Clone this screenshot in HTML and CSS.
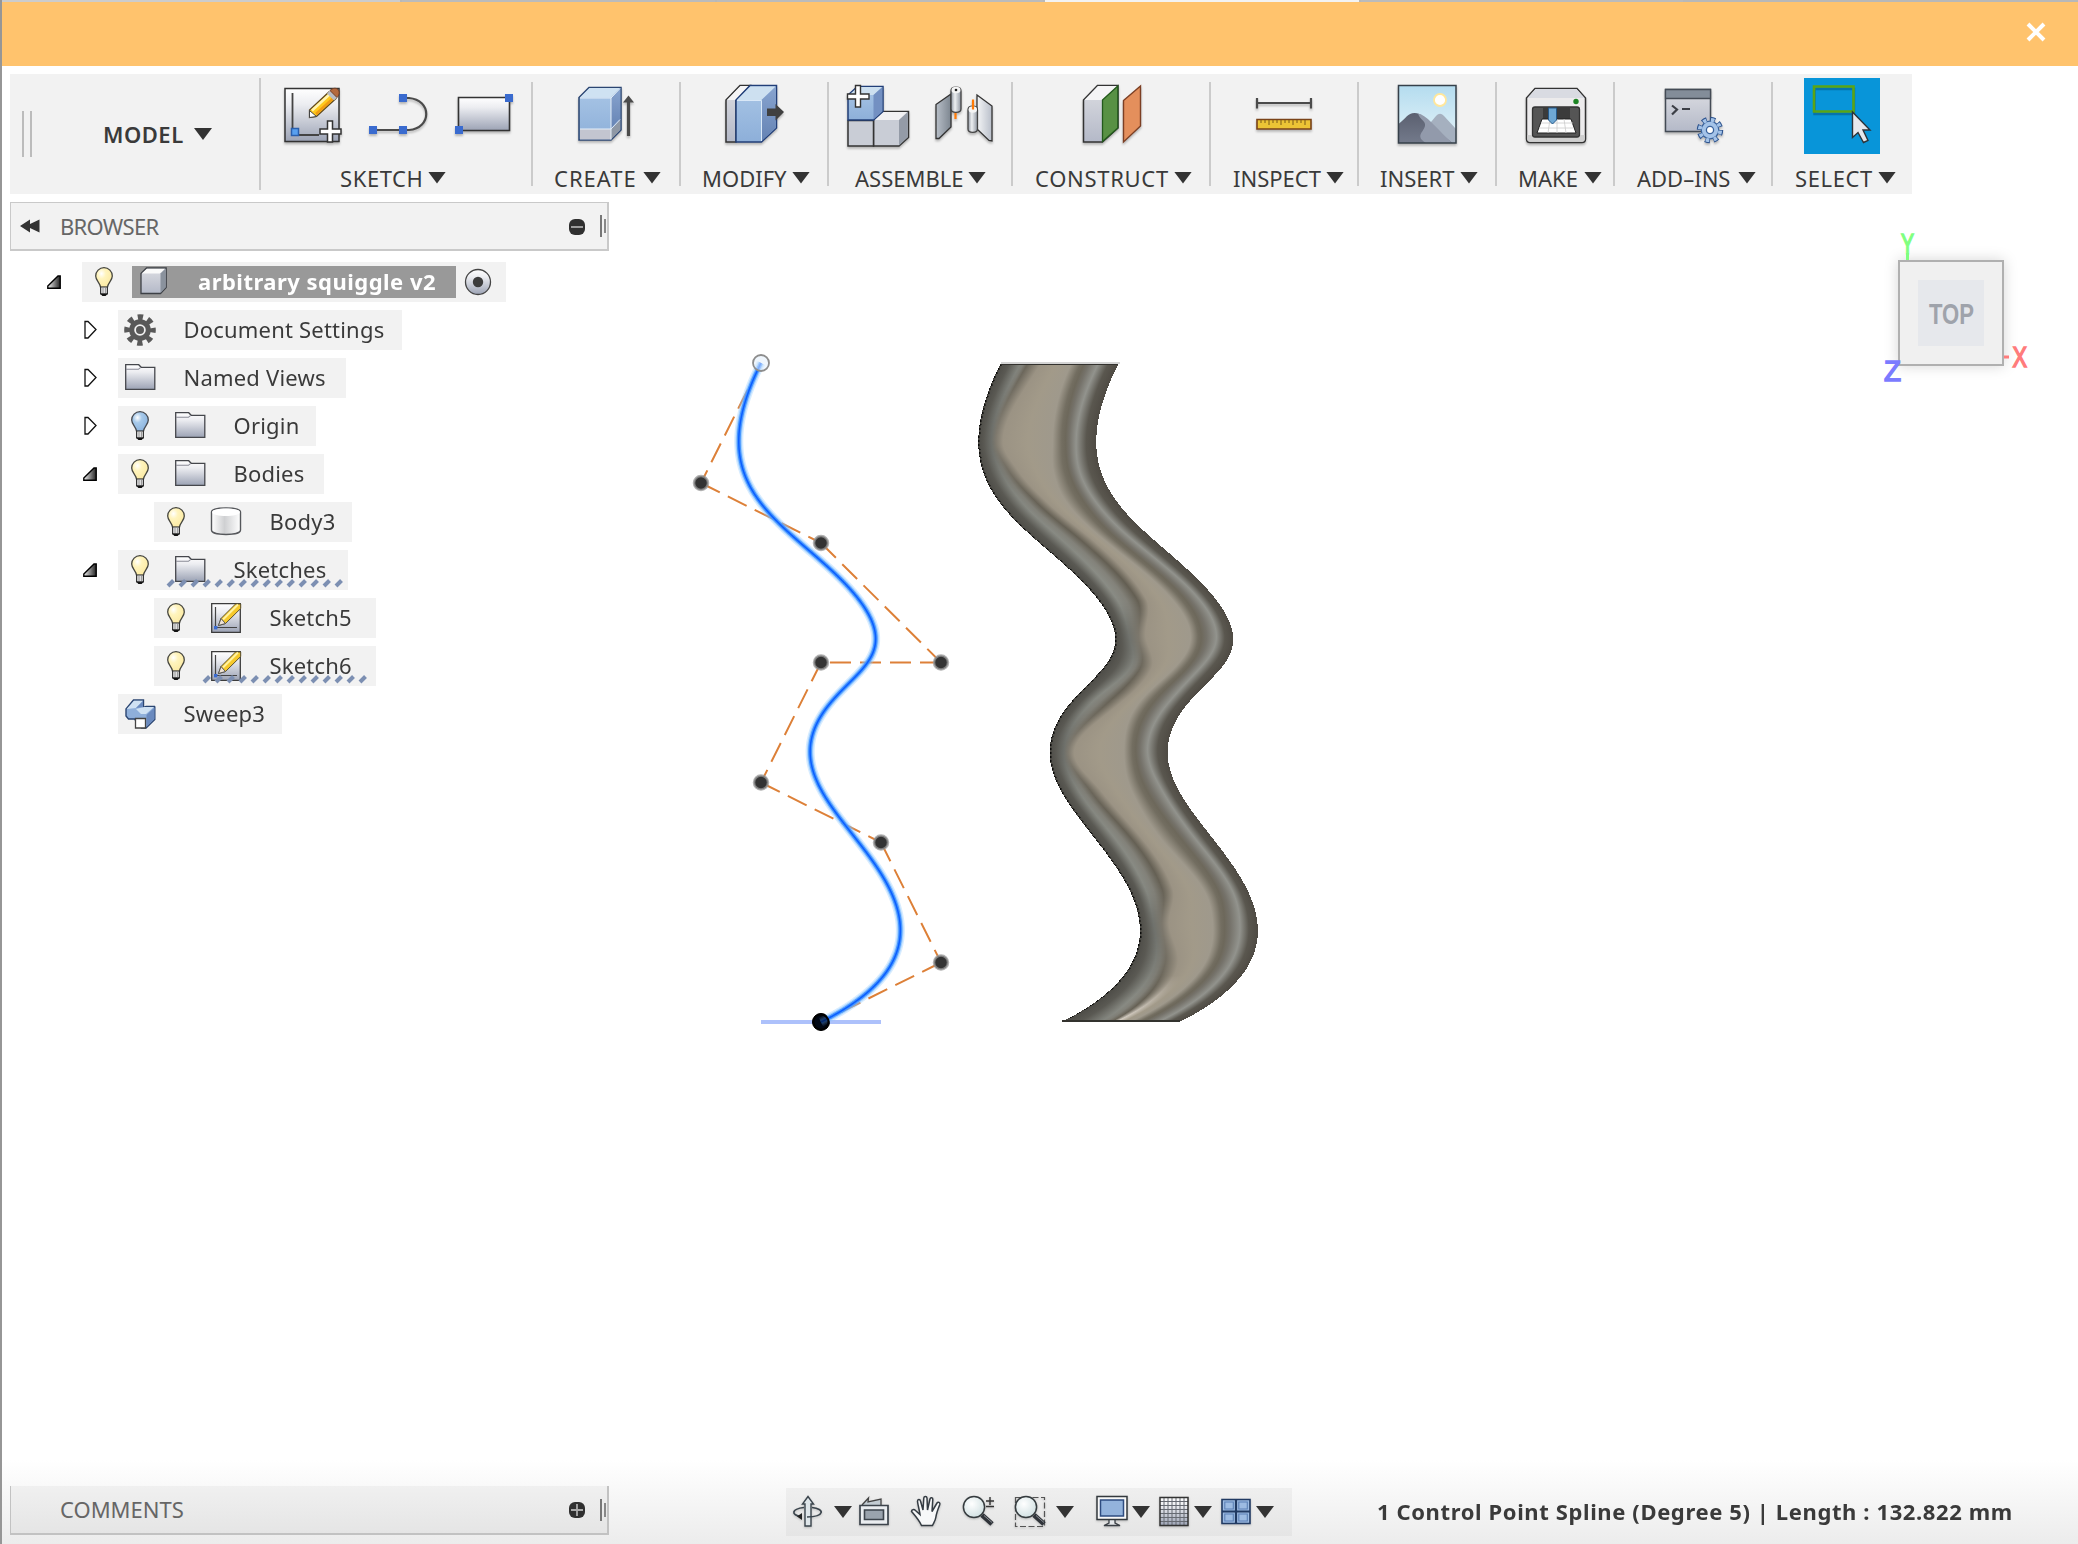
FILE: index.html
```html
<!DOCTYPE html>
<html lang="en">
<head>
<meta charset="utf-8">
<title>arbitrary squiggle v2</title>
<link rel="stylesheet" href="styles.css">
</head>
<body>
<svg class="defs" width="0" height="0">
  <defs>
    <linearGradient id="steel" x1="0" y1="0" x2="0" y2="1"><stop offset="0" stop-color="#fff"/><stop offset=".3" stop-color="#ecedf1"/><stop offset="1" stop-color="#9ca3b5"/></linearGradient>
    <linearGradient id="blue" x1="0" y1="0" x2="0" y2="1"><stop offset="0" stop-color="#a9c6e6"/><stop offset="1" stop-color="#8dafd9"/></linearGradient>
    <linearGradient id="blueside" x1="0" y1="0" x2="0" y2="1"><stop offset="0" stop-color="#88a4cf"/><stop offset="1" stop-color="#6583b4"/></linearGradient>
    <linearGradient id="grey" x1="0" y1="0" x2="0" y2="1"><stop offset="0" stop-color="#dcdde2"/><stop offset="1" stop-color="#b4b9c8"/></linearGradient>
    <linearGradient id="cyl" x1="0" y1="0" x2="1" y2="0"><stop offset="0" stop-color="#fff"/><stop offset=".45" stop-color="#cfd0d2"/><stop offset="1" stop-color="#fff"/></linearGradient>
    <linearGradient id="pin" x1="0" y1="0" x2="1" y2="0"><stop offset="0" stop-color="#8f96a1"/><stop offset=".4" stop-color="#eef0f2"/><stop offset="1" stop-color="#8f96a1"/></linearGradient>
    <linearGradient id="leaf" x1="0" y1="0" x2="1" y2="0"><stop offset="0" stop-color="#b8bfc8"/><stop offset="1" stop-color="#7d8690"/></linearGradient>
    <linearGradient id="leaf2" x1="0" y1="0" x2="1" y2="0"><stop offset="0" stop-color="#f4f5f6"/><stop offset="1" stop-color="#b9bfca"/></linearGradient>
    <linearGradient id="sky" x1="0" y1="0" x2="0" y2="1"><stop offset="0" stop-color="#b4dcef"/><stop offset="1" stop-color="#e6f4f9"/></linearGradient>
    <linearGradient id="hill" x1="0" y1="0" x2="0" y2="1"><stop offset="0" stop-color="#5b6070"/><stop offset="1" stop-color="#737a8b"/></linearGradient>
    <linearGradient id="fold" x1="0" y1="0" x2="1" y2="0"><stop offset="0" stop-color="#f2f2f2"/><stop offset="1" stop-color="#222"/></linearGradient>
    <radialGradient id="yglow" cx=".35" cy=".3" r=".75"><stop offset="0" stop-color="#fff"/><stop offset=".35" stop-color="#fff4bd"/><stop offset="1" stop-color="#fbe9a0"/></radialGradient>
    <radialGradient id="bglow" cx=".35" cy=".3" r=".75"><stop offset="0" stop-color="#fff"/><stop offset=".35" stop-color="#a6c9ea"/><stop offset="1" stop-color="#8ab2dd"/></radialGradient>
    <radialGradient id="lens" cx=".4" cy=".35" r=".7"><stop offset="0" stop-color="#fff"/><stop offset="1" stop-color="#cfdfe1"/></radialGradient>
    <pattern id="hatch" width="12" height="12" patternUnits="userSpaceOnUse"><path d="M2 9 7.500 3.500" stroke="#7c8fb2" stroke-width="4"/></pattern>
  </defs>
  <symbol id="bulb-base" viewBox="0 0 20 32"><path d="M6.6 21h6.8v7H6.6z" fill="#e9e9ea" stroke="#333" stroke-width="1.2"/><path d="M9 21v6M11.4 21v6" stroke="#888" stroke-width=".9"/><path d="M6.2 27.4h7.6L11.6 30H8.4z" fill="#111"/></symbol>
  <symbol id="bulb" viewBox="0 0 20 32"><path d="M10 1.7a8.3 8.3 0 0 0-8.3 8.4c0 4.4 4.2 6.4 4.9 11.4h6.8c.7-5 4.9-7 4.9-11.4A8.3 8.3 0 0 0 10 1.700z" fill="url(#yglow)" stroke="#46463f" stroke-width="1.3"/><use href="#bulb-base" width="20" height="32"/></symbol>
  <symbol id="bulb-off" viewBox="0 0 20 32"><path d="M10 1.700a8.300 8.300 0 0 0-8.300 8.400c0 4.400 4.200 6.400 4.900 11.400h6.800c.7-5 4.900-7 4.900-11.400A8.300 8.300 0 0 0 10 1.700z" fill="url(#bglow)" stroke="#46494f" stroke-width="1.300"/><use href="#bulb-base" width="20" height="32"/></symbol>
  <symbol id="folder" viewBox="0 0 32 32"><path d="M1.700 2.700h13l2.500 2.600h13.600v22H1.700z" fill="url(#steel)" stroke="#45474c" stroke-width="1.300"/><path d="M2 7.300h12.400l2.400-2" fill="none" stroke="#8a8c96" stroke-width="1.100"/></symbol>
  <symbol id="sketch" viewBox="0 0 32 32"><path d="M1.700 1.700h28.600v28.600H1.700z" fill="url(#steel)" stroke="#3c3c3c" stroke-width="1.300"/><path d="M5.500 5v20.500H27" fill="none" stroke="#444" stroke-width="1.200"/><path d="M4 24h3.400v3.400H4z" fill="#3a6bd0"/><path d="M8.500 23.500 11 16.500 25.500 2h5.200v4.500L15.500 21.500z" fill="#f6c92c" stroke="#5d5230" stroke-width="1"/><path d="M13 17.500 28 2.500" stroke="#fff2a0" stroke-width="2"/><path d="M8.500 23.500 11 16.500l4.500 5z" fill="#efe3d6" stroke="#555" stroke-width="1"/></symbol>
  <symbol id="closed" viewBox="0 0 14 20"><path d="M1 1.500h3l8 8-8 8.500H1z" fill="#fff" stroke="#111" stroke-width="1.300"/></symbol>
  <symbol id="open" viewBox="0 0 14 14"><path d="M.8 13.200V11L11 1h2.200v12.200z" fill="url(#fold)" stroke="#000" stroke-width="1.400"/></symbol>
  <symbol id="lensicon" viewBox="0 0 32 32"><path d="m20 20 10 9" stroke="#30343a" stroke-width="5"/><path d="m22 20.500 8 7" stroke="#8b9096" stroke-width="1"/><circle cx="12" cy="12" r="10.600" fill="url(#lens)" stroke="#353b3e" stroke-width="1.500"/></symbol>
</svg>

<div class="tabstrip"><i class="tab t1"></i><i class="tab t2"></i><i class="tab t3"></i><i class="tab t4"></i><i class="tab t5"></i></div>
<header class="banner">
  <svg class="close" viewBox="0 0 20 20"><path d="m2 2 16 16M18 2 2 18" stroke="#fff" stroke-width="4"/></svg>
</header>

<nav class="toolbar">
  <div class="workspace"><i class="grip"></i><span class="model">MODEL</span><i class="caret"></i></div>

  <section class="group g-sketch">
    <div class="tools">
      <svg class="tool" viewBox="0 0 76 76"><path d="M11 10.500h54v53H11z" fill="url(#steel)" stroke="#333" stroke-width="1.500"/><path d="M18.500 15v42H45" fill="none" stroke="#444" stroke-width="1.800"/><path d="M17.500 50.500h7v7h-7z" fill="#58a0f0" stroke="#2a5fae" stroke-width="1.500"/><path d="M35.500 39.500v-7.500L55 14l7 6.500-19.500 18z" fill="#ffc91c" stroke="#5e4820" stroke-width="1.300"/><path d="M38 32.500 56 16" stroke="#fff4b0" stroke-width="2.500"/><path d="m42 36 18-16.500" stroke="#f09b13" stroke-width="2.500"/><path d="m53 15.500 7 7 3-3-7-7z" fill="#b9bcc4"/><path d="m56 12.500 7 7c3-3 2.500-6.500 1-8s-5-2-8 1z" fill="#b4693e" stroke="#6b3a22"/><path d="M35.500 39.500v-7l7 6z" fill="#fff" stroke="#444"/><path d="M53.500 43h5v8h8.500v5h-8.500v8h-5v-8H46v-5h7.500z" fill="#fff" stroke="#333" stroke-width="1.500"/></svg>
      <svg class="tool" viewBox="0 0 76 76"><path d="M13 52h30h6C72 50 72 22 49 20h-6" fill="none" stroke="#4b4b4b" stroke-width="2.200"/><path d="M9 48h8v8H9zM39 48h8v8h-8zM39 16h8v8h-8z" fill="#3a6bcf"/></svg>
      <svg class="tool" viewBox="0 0 76 76"><path d="M12.500 19.500h51v33h-51z" fill="url(#steel)" stroke="#333" stroke-width="1.600"/><path d="M59 16h8v8h-8zM9 48h8v8H9z" fill="#3a6bcf"/></svg>
    </div>
    <div class="label"><span>SKETCH</span><i class="caret"></i></div>
  </section>
  <section class="group g-create">
    <div class="tools">
      <svg class="tool" viewBox="0 0 76 76"><path d="M11 19.500 21 9.500h32v42.500L43 62H11z" fill="url(#blue)" stroke="#2b4571" stroke-width="1.500"/><path d="M12 19.500 21.500 10H52l-9 9.500z" fill="#cfe2f2"/><path d="M43 19.500 52.300 10v32L43 51.500z" fill="url(#blueside)"/><path d="M12 51h31v10.500H12z" fill="#c3c5d0"/><path d="m43 51.500 9.300-9.500v10L43 61.500z" fill="#8f98a5"/><path d="M12 20h31v41.500M12 51h31l9-9.500M43 20l9-9.500" fill="none" stroke="#e4eef8" stroke-width="1"/><path d="M60.500 58V24" stroke="#4b4b4b" stroke-width="3.200"/><path d="m55 24.500 5.500-7 5.500 7z" fill="#4b4b4b"/></svg>
    </div>
    <div class="label"><span>CREATE</span><i class="caret"></i></div>
  </section>
  <section class="group g-modify">
    <div class="tools">
      <svg class="tool" viewBox="0 0 76 76"><path d="m10 22 14-14.500h10L20 22v42H10z" fill="url(#grey)" stroke="#333" stroke-width="1.500"/><path d="m11 22 13.500-14H33L20 22z" fill="#f5f5f6"/><path d="M20 22 34 7.500h26.500V50L45.500 64H20z" fill="url(#blue)" stroke="#223f78" stroke-width="1.500"/><path d="M21 22 34.500 8.500H59.500L45.500 22z" fill="#cde0f0"/><path d="m45.500 22 14.300-13.500V50L45.500 63z" fill="url(#blueside)"/><path d="M21 22.500h24.500V63" fill="none" stroke="#d9e8f7" stroke-width="1"/><path d="M51 30.500h8.500V26l8.500 8-8.500 8.500V38H51z" fill="#404040"/></svg>
    </div>
    <div class="label"><span>MODIFY</span><i class="caret"></i></div>
  </section>
  <section class="group g-assemble">
    <div class="tools">
      <svg class="tool" viewBox="0 0 76 76"><path d="M34.500 42 43 33.500h26.500v26L60 68H34.500z" fill="#c9cdd6" stroke="#333" stroke-width="1.500"/><path d="m35.500 42 8.500-8h24.500l-8.500 8z" fill="#f1f1f3"/><path d="m60 42 8.700-8v25L60 67.500z" fill="#949ba7"/><path d="M9 42.500h25.500V68H9z" fill="#c9cdd6" stroke="#333" stroke-width="1.500"/><path d="m9 17 9.500-8.500H44v25L34.500 42H9z" fill="url(#blue)" stroke="#223f78" stroke-width="1.500"/><path d="m10 17 9-8h24.500l-9 8z" fill="#cde0f0"/><path d="m34.500 17 8.800-8v24.500l-8.800 8z" fill="#7390c2"/><path d="M16.500 7.500h5V16H30v5h-8.500v8h-5v-8H8.500v-5h8z" fill="#fff" stroke="#333" stroke-width="1.400"/></svg>
      <svg class="tool" viewBox="0 0 76 76"><path d="M11 26.500 26 16v33L14 60.500h-3z" fill="url(#leaf)" stroke="#333" stroke-width="1.300"/><path d="M30.500 34v7" stroke="#ff7a05" stroke-width="2.200"/><path d="M26 13c0-5 10-5 10 0v18c0 4.500-10 4.500-10 0z" fill="url(#pin)" stroke="#444" stroke-width="1.300"/><ellipse cx="31" cy="12" rx="4.500" ry="3.300" fill="#f5f5f5"/><circle cx="31" cy="12" r="1.300" fill="#222"/><path d="M52 17 67 28v35l-3-.5L52 51z" fill="url(#leaf2)" stroke="#333" stroke-width="1.300"/><path d="M43 32c0-5 9.500-5 9.500 0v19c0 4.500-9.500 4.500-9.500 0z" fill="url(#pin)" stroke="#444" stroke-width="1.300"/><ellipse cx="47.800" cy="31.500" rx="4.200" ry="3.300" fill="#f5f5f5"/><path d="M48 21.500v10" stroke="#ff7a05" stroke-width="2.200"/></svg>
    </div>
    <div class="label"><span>ASSEMBLE</span><i class="caret"></i></div>
  </section>
  <section class="group g-construct">
    <div class="tools">
      <svg class="tool" viewBox="0 0 76 76"><path d="m10.500 22 14-14.500H45V50L29.500 64h-19z" fill="url(#grey)" stroke="#333" stroke-width="1.500"/><path d="m11.500 22 13.500-14h19L29.500 22z" fill="#f5f5f6"/><path d="M29.500 22 44.800 8v42L29.500 63.500z" fill="#589144" stroke="#235a1c" stroke-width="1.300"/><path d="M50.500 22.500 67.500 8v40L50.500 64z" fill="#e48f5c" stroke="#7c3f24" stroke-width="1.400"/></svg>
    </div>
    <div class="label"><span>CONSTRUCT</span><i class="caret"></i></div>
  </section>
  <section class="group g-inspect">
    <div class="tools">
      <svg class="tool" viewBox="0 0 76 76"><path d="M11 25h54M11 20v10.500M65 20v10.500" stroke="#4b4b4b" stroke-width="2.200"/><path d="M11 41.500h54v9.500H11z" fill="#ecc435" stroke="#7a4318" stroke-width="1.600"/><path d="M15 42v3m4-3v3m4-3v5m4-5v3m4-3v3m4-3v5m4-5v3m4-3v3m4-3v5m4-5v3m4-3v3m4-3v5" stroke="#7a5a18" stroke-width="1"/></svg>
    </div>
    <div class="label"><span>INSPECT</span><i class="caret"></i></div>
  </section>
  <section class="group g-insert">
    <div class="tools">
      <svg class="tool" viewBox="0 0 76 76"><path d="M9.500 7.500h57.500v57.500H9.500z" fill="url(#sky)"/><circle cx="51" cy="22" r="6" fill="#fff" stroke="#ffe79b" stroke-width="1.800"/><path d="m37 50 10-12c3-3 5-3 8 0l12 13v14H37z" fill="#a5b0bf"/><path d="M9.500 46c8-6 9-11 16-11s11 6 17 13l21 17h-54z" fill="url(#hill)"/><path d="M29 35.500c9 2 16 12 34 29.500H37c-11-7-3-10-1-17 1-5-5-6-7-12.500z" fill="#929aab"/><path d="M9.500 7.500h57.500v57.500H9.500z" fill="none" stroke="#36404a" stroke-width="1.500"/></svg>
    </div>
    <div class="label"><span>INSERT</span><i class="caret"></i></div>
  </section>
  <section class="group g-make">
    <div class="tools">
      <svg class="tool" viewBox="0 0 76 76"><path d="M9.500 20 18 10.500h42l8.500 9.500v41c0 2-1.500 3.500-3.500 3.500H13c-2 0-3.500-1.500-3.500-3.500z" fill="#ecebec" stroke="#333" stroke-width="1.500"/><path d="m10.500 20 8-9h41l8 9z" fill="#d9dbe2"/><path d="M10.300 57h57.400v4c0 1.500-1.200 2.700-2.700 2.700H13c-1.500 0-2.700-1.200-2.700-2.700z" fill="#cfcfcf"/><rect x="15.500" y="29" width="47" height="30" rx="2.500" fill="#555" stroke="#333" stroke-width="1.300"/><path d="M26 30h27v12H26z" fill="#3b3b3b"/><path d="M25 41h29l5 14H20z" fill="#fff" stroke="#222"/><path d="M22 50h34M24 45h32M33 41l-2 14M40 41v14M47 41l2 14" stroke="#ccc" stroke-width=".8"/><path d="M31.500 30h8v12l-4 4-4-4z" fill="#6fa8d4" stroke="#25598a"/><circle cx="59" cy="23.500" r="2.700" fill="#1c8423"/></svg>
    </div>
    <div class="label"><span>MAKE</span><i class="caret"></i></div>
  </section>
  <section class="group g-addins">
    <div class="tools">
      <svg class="tool" viewBox="0 0 76 76"><path d="M10.500 11.500h45v42h-45z" fill="url(#grey)" stroke="#444b55" stroke-width="1.500"/><path d="M10.500 11.500h45v9h-45z" fill="#838d99" stroke="#444b55" stroke-width="1.300"/><path d="m17 27.500 5 4-5 5M27 31h8" fill="none" stroke="#3c3f46" stroke-width="2.200"/><circle cx="55" cy="52" r="10.500" fill="none" stroke="#2f5590" stroke-width="5.500" stroke-dasharray="4.700 3.550"/><circle cx="55" cy="52" r="8.800" fill="#a4c3e8" stroke="#3a639c" stroke-width="1.300"/><circle cx="55" cy="52" r="10.200" fill="none" stroke="#a4c3e8" stroke-width="3.800" stroke-dasharray="3.300 4.710" stroke-dashoffset="-.7"/><circle cx="55" cy="52" r="3.600" fill="#fff" stroke="#3a639c" stroke-width="1.300"/></svg>
    </div>
    <div class="label"><span>ADD–INS</span><i class="caret"></i></div>
  </section>
  <section class="group g-select">
    <div class="tools">
      <svg class="tool active" viewBox="0 0 76 76"><path d="M10 9h39.500v25H10z" fill="none" stroke="#0673ac" stroke-width="2.500" transform="translate(.5 2)"/><path d="M10 8.500h39.500v25H10z" fill="none" stroke="#5ba414" stroke-width="2.600"/><path d="M48.500 34v25.500l5.500-5 5.500 10 4.500-2-5-10.500h7z" fill="#e6e8ed" stroke="#2c3238" stroke-width="1.400"/></svg>
    </div>
    <div class="label"><span>SELECT</span><i class="caret"></i></div>
  </section>
</nav>

<main class="workarea">
  <canvas class="scene" id="scene" width="700" height="720"></canvas>
  <svg class="viewcube" viewBox="0 0 160 180">
    <rect class="cube" x="25" y="35" width="104" height="104"/>
    <rect x="44" y="54" width="66" height="66" fill="#e6e8ec"/>
    <text class="face" x="55" y="97.500" textLength="45" lengthAdjust="spacingAndGlyphs">TOP</text>
    <text class="axis y" x="27" y="28" textLength="13" lengthAdjust="spacingAndGlyphs">Y</text>
    <path d="M33.500 27v7" stroke="#80ff80" stroke-width="3"/>
    <text class="axis x" x="138.500" y="141" textLength="14.500" lengthAdjust="spacingAndGlyphs">X</text>
    <path d="M130 131h5" stroke="#ff7b7b" stroke-width="3"/>
    <text class="axis z" x="10" y="155" textLength="17" lengthAdjust="spacingAndGlyphs">Z</text>
  </svg>

  <aside class="sidebar">
    <div class="panel browser">
      <svg class="rewind" viewBox="0 0 20 14"><path d="M0 7 10 .5V5l9.500-4.500v13L10 9v4.500z" fill="#333"/></svg>
      <span class="ptitle tight">BROWSER</span>
      <svg class="dot" viewBox="0 0 16 16"><rect width="16" height="16" rx="6" fill="#303030"/><path d="M2 8h12" stroke="#aaa" stroke-width="1.800"/></svg>
      <i class="pgrip"></i>
    </div>

    <ul class="tree">
      <li class="row l0"><svg class="twist open"><use href="#open"/></svg>
        <div class="node root"><svg class="bulb"><use href="#bulb"/></svg>
          <div class="selected"><svg class="ico" viewBox="0 0 32 32"><path d="M3 7.500 8.500 2h19.700v19.500L22.500 27.500H3z" fill="url(#grey)" stroke="#3d4046" stroke-width="1.300"/><path d="M3.700 7.500 9 2.700h18l-5 4.800z" fill="#fafafa"/><path d="m22.500 7.500 5-5v19l-5 5.500z" fill="#8a929d"/></svg><span>arbitrary squiggle v2</span></div>
          <svg class="radio" viewBox="0 0 28 28"><circle cx="14" cy="14" r="12.500" fill="url(#steel)" stroke="#444" stroke-width="1.300"/><circle cx="14" cy="14" r="5.200" fill="#3d3d3d"/></svg></div></li>
      <li class="row l1"><svg class="twist closed"><use href="#closed"/></svg><div class="node w284"><svg class="ico" viewBox="0 0 32 32"><circle cx="16" cy="16" r="12.800" fill="none" stroke="#595959" stroke-width="6" stroke-dasharray="5.200 4.850" stroke-dashoffset="2.600"/><circle cx="16" cy="16" r="8.300" fill="none" stroke="#595959" stroke-width="5"/><circle cx="16" cy="16" r="4" fill="#595959"/></svg><span>Document Settings</span></div></li>
      <li class="row l1"><svg class="twist closed"><use href="#closed"/></svg><div class="node w228"><svg class="ico"><use href="#folder"/></svg><span>Named Views</span></div></li>
      <li class="row l1"><svg class="twist closed"><use href="#closed"/></svg><div class="node w198"><svg class="bulb"><use href="#bulb-off"/></svg><svg class="ico"><use href="#folder"/></svg><span>Origin</span></div></li>
      <li class="row l1"><svg class="twist open"><use href="#open"/></svg><div class="node w206"><svg class="bulb"><use href="#bulb"/></svg><svg class="ico"><use href="#folder"/></svg><span>Bodies</span></div></li>
      <li class="row l2"><div class="node w198"><svg class="bulb"><use href="#bulb"/></svg><svg class="ico" viewBox="0 0 32 32"><path d="M1.500 6v18c0 6 29 6 29 0V6c0-5.500-29-5.500-29 0z" fill="url(#cyl)" stroke="#55575b" stroke-width="1.400"/><path d="M2.200 6.200c0 5 27.600 5 27.600 0s-27.600-5-27.600 0z" fill="#fff"/></svg><span>Body3</span></div></li>
      <li class="row l1"><svg class="twist open"><use href="#open"/></svg><div class="node w230"><svg class="bulb"><use href="#bulb"/></svg><svg class="ico"><use href="#folder"/></svg><span>Sketches</span><svg class="hatch" width="180" height="12"><rect width="180" height="12" fill="url(#hatch)"/></svg></div></li>
      <li class="row l2"><div class="node w222"><svg class="bulb"><use href="#bulb"/></svg><svg class="ico"><use href="#sketch"/></svg><span>Sketch5</span></div></li>
      <li class="row l2"><div class="node w222"><svg class="bulb"><use href="#bulb"/></svg><svg class="ico"><use href="#sketch"/></svg><span>Sketch6</span><svg class="hatch" width="168" height="12"><rect width="168" height="12" fill="url(#hatch)"/></svg></div></li>
      <li class="row l1"><i class="twist"></i><div class="node w164"><svg class="ico" viewBox="0 0 32 32"><path d="M2 11 9.500 2h10v7.500L22 8.500h8.500l.3.500v12.500L22 30h-4.500l-7-9H4.500L2 18z" fill="#8fafda" stroke="#2b4571" stroke-width="1.400"/><path d="M2.700 11 10 2.700h9L12 10z M12 11l8-2h10l-8 7h-5z" fill="#cfe1f3"/><path d="m22.500 17 8-7.500v11.500l-8 8z" fill="#6a8abf"/><path d="m12 10 7-7v6z" fill="#6a8abf"/><path d="M11.500 20.500h10v9.500h-10z" fill="#fff" stroke="#444" stroke-width="1.300"/></svg><span>Sweep3</span></div></li>
    </ul>
  </aside>

  <footer class="bottom">
    <div class="panel comments">
      <span class="ptitle">COMMENTS</span>
      <svg class="dot" viewBox="0 0 16 16"><rect width="16" height="16" rx="6" fill="#303030"/><path d="M2 8h12M8 2v12" stroke="#aaa" stroke-width="1.800"/></svg>
      <i class="pgrip"></i>
    </div>
    <div class="navbar">
      <svg class="nav a1" viewBox="0 0 32 32"><path d="M13 31V9h-2.500L16 1.500 21.500 9H19v22z" fill="#dfe6ea" stroke="#3a444c" stroke-width="1.400"/><path d="M12 12.500C-1 14-1 20 9 21.500M20 12.500c13 1.500 13 9-5 9.500" fill="none" stroke="#3a444c" stroke-width="1.700"/><path d="m5 21.500 5-3.500v7z" fill="#222"/></svg>
      <i class="caret c1"></i>
      <svg class="nav a2" viewBox="0 0 32 32"><path d="m4 10 6.500-7-.5 4L23 4v6" fill="#c3ccd3" stroke="#444" stroke-width="1.300"/><path d="M2 10.500h28v19H2z" fill="#eaedf0" stroke="#3d444c" stroke-width="1.700"/><path d="M6.500 15h19v9.500h-19z" fill="#9aa3ad" stroke="#3d444c" stroke-width="1.600"/></svg>
      <svg class="nav a3" viewBox="0 0 32 32"><path d="M11.500 30.500C9 25 4.500 20 1.500 16.500c0-2 2.500-2.500 4-1l4.500 4c-.5-4-2-9-2.500-13 0-2.500 2.500-2.500 3-.5L13 15l.8-12c.2-2 3-2 3.200 0l.5 12L20 4c.5-2 3-1.500 2.800.5L22 16.500l5-8.500c1-1.500 3.500-.5 2.800 1.500-2 5-3.500 9-4 13-.5 3.500-2.300 5.500-3.300 8z" fill="#f7f8f9" stroke="#343b42" stroke-width="1.500"/></svg>
      <svg class="nav a4" viewBox="0 0 32 32"><use href="#lensicon" width="32" height="32"/><path d="M24 6h8M28 2v8M24 11.500h8" stroke="#333" stroke-width="1.400"/></svg>
      <svg class="nav a5" viewBox="0 0 32 32"><path d="M1.500 2.500h29v29h-29z" fill="none" stroke="#555" stroke-width="1.200" stroke-dasharray="6 2.500"/><use href="#lensicon" width="32" height="32"/></svg>
      <i class="caret c2"></i>
      <svg class="nav a6" viewBox="0 0 32 32"><path d="M13 24h6v4l5 2.500H8l5-2.500z" fill="#e4e7ea" stroke="#3a3f45" stroke-width="1.300"/><path d="M1 1.500h30v23H1z" fill="#f8f8f8" stroke="#33383d" stroke-width="1.500"/><path d="M4.500 5h23v16h-23z" fill="#93b3dc" stroke="#2e4c80" stroke-width="1.500"/></svg>
      <i class="caret c3"></i>
      <svg class="nav a7" viewBox="0 0 32 32"><path d="M2 2.500h28v28H2z" fill="url(#steel)"/><path d="M6 2v28M10 2v28M14 2v28M18 2v28M22 2v28M26 2v28M2 6.500h28M2 10.500h28M2 14.500h28M2 18.500h28M2 22.500h28M2 26.500h28" stroke="#666a72" stroke-width="1"/><path d="M2 2.500h28v28H2z" fill="none" stroke="#333" stroke-width="1.500"/></svg>
      <i class="caret c4"></i>
      <svg class="nav a8" viewBox="0 0 32 32"><path d="M2 4.500h28v24H2z" fill="#9dbbe2" stroke="#213a63" stroke-width="1.600"/><path d="M16 4v25M2 16.500h28" stroke="#213a63" stroke-width="2.200"/><path d="M4.800 7h8.500v7H4.800zM18.800 7h8.500v7h-8.500zM4.800 19h8.500v7H4.800zM18.800 19h8.500v7h-8.500z" fill="none" stroke="#5c80b5" stroke-width="1.100"/></svg>
      <i class="caret c5"></i>
    </div>
    <div class="status">1 Control Point Spline (Degree 5) | Length : 132.822 mm</div>
  </footer>
</main>
<script src="scene.js"></script>
</body>
</html>
```
FILE: styles.css
```css
* { box-sizing: border-box; }
body {
  margin: 0;
  width: 2078px;
  height: 1544px;
  overflow: hidden;
  display: flex;
  flex-direction: column;
  background: #fff;
  border-left: 2px solid #969696;
  font-family: "Noto Sans", "Open Sans", sans-serif;
  font-size: 22px;
  line-height: 30px;
  color: #3a3a3a;
}
svg { display: block; flex: none; }
.defs { position: absolute; }

.tabstrip { display: flex; height: 2px; background: #b8b8b8; gap: 2px; flex: none; }
.tab { background: #bbb; }
.t1 { width: 398px; background: #ccc; }
.t2 { width: 313px; }
.t3 { width: 326px; }
.t4 { width: 314px; background: #f3f3f3; }
.t5 { width: 322px; }

.banner { height: 64px; flex: none; background: #ffc36d; display: flex; justify-content: flex-end; padding: 20px 32px 0 0; }
.close { width: 20px; height: 20px; }

.toolbar { display: flex; flex: none; width: 1902px; height: 120px; margin: 8px 0 0 8px; background: #f2f2f2; }
.caret { flex: none; width: 18px; height: 12px; background: #333; clip-path: polygon(0 0, 100% 0, 50% 100%); }
.workspace { width: 249px; display: flex; align-items: center; }
.grip { width: 10px; height: 46px; margin: 0 71px 0 12px; border: solid #bcbcbc; border-width: 0 2px; }
.model { width: 82px; font-weight: 600; margin-right: 9px; letter-spacing: .5px; }
.group { position: relative; display: flex; flex-direction: column; border-left: 2px solid transparent; border-image: linear-gradient(transparent 9px, #cbcbcb 9px, #cbcbcb 111px, transparent 111px) 1; }
.g-sketch { border-image: linear-gradient(transparent 5px, #cbcbcb 5px, #cbcbcb 115px, transparent 115px) 1; }
.tools { display: flex; justify-content: center; gap: 10px; padding-top: 4px; height: 91px; }
.tool { width: 76px; height: 76px; filter: drop-shadow(0 2px 1px rgba(0, 0, 0, .25)); }
.tool.active { background: #0895d9; filter: none; }
.label { display: flex; align-items: center; line-height: 26px; white-space: nowrap; }
.label .caret { margin-top: -1px; }
.label span { flex: none; }
.g-sketch { width: 272px; } .g-sketch .label { margin-left: 79px; } .g-sketch span { width: 88px; letter-spacing: .6px; }
.g-create { width: 148px; } .g-create .label { margin-left: 21px; } .g-create span { width: 89px; letter-spacing: 1px; }
.g-modify { width: 148px; } .g-modify .label { margin-left: 21px; } .g-modify span { width: 90px; }
.g-assemble { width: 184px; } .g-assemble .label { margin-left: 26px; } .g-assemble span { width: 113px; }
.g-construct { width: 198px; } .g-construct .label { margin-left: 22px; } .g-construct span { width: 139px; letter-spacing: .7px; }
.g-inspect { width: 148px; } .g-inspect .label { margin-left: 22px; } .g-inspect span { width: 93px; }
.g-insert { width: 138px; } .g-insert .label { margin-left: 21px; } .g-insert span { width: 80px; }
.g-make { width: 118px; } .g-make .label { margin-left: 21px; } .g-make span { width: 66px; }
.g-addins { width: 158px; } .g-addins .label { margin-left: 22px; } .g-addins span { width: 101px; }
.g-select { width: 140px; } .g-select .label { margin-left: 22px; } .g-select span { width: 83px; letter-spacing: .6px; }
.g-sketch .tools { padding-left: 4px; }

.workarea {
  position: relative;
  flex: 1;
  display: flex;
  flex-direction: column;
  background: linear-gradient(to bottom, #fff 0, #fff calc(100% - 84px), #ececec 100%);
}
.scene { position: absolute; left: 648px; top: 136px; }
.viewcube { position: absolute; left: 1872px; top: 32px; width: 160px; height: 180px; }
.cube { fill: #f0f0f0; stroke: #b0b0b0; stroke-width: 2; filter: drop-shadow(0 0 7px rgba(0, 0, 0, .16)); }
.face { font: bold 30px "Liberation Sans", sans-serif; fill: #9fa3ab; }
.axis { font: 29px "Liberation Sans", sans-serif; stroke-width: 1.6; }
.axis.y { fill: #80ff80; stroke: #80ff80; }
.axis.x { fill: #ff7b7b; stroke: #ff7b7b; }
.axis.z { fill: #7b7bff; stroke: #7b7bff; }

.sidebar { position: relative; padding: 8px 0 0 8px; flex: 1; }
.panel { width: 599px; height: 49px; display: flex; align-items: center; background: #f2f2f2; border: 2px solid #c9c9c9; border-width: 1px 2px 2px 1px; color: #666; }
.ptitle { flex: 1; padding-bottom: 1px; }
.ptitle.tight { letter-spacing: -.7px; }
.rewind { width: 20px; height: 14px; margin: 0 20px 0 9px; }
.dot { width: 16px; height: 16px; margin-top: 1px; }
.pgrip { width: 6px; height: 22px; margin: 0 1px 0 15px; background: linear-gradient(#777, #777) 0 0 / 2px 22px no-repeat, linear-gradient(#888, #888) 4px 4px / 2px 14px no-repeat; }

.tree { list-style: none; margin: 11px 0 0; padding: 0; display: flex; flex-direction: column; gap: 8px; }
.row { display: flex; align-items: center; height: 40px; }
.twist { flex: none; width: 14px; height: 14px; }
.twist.closed { height: 20px; }
.l0 { padding-left: 37px; }
.l0 .twist { margin-right: 21px; margin-top: -1px; }
.l1 { padding-left: 73px; }
.l1 .twist { margin-right: 21px; }
.l1 .open { margin-top: -1px; }
.l1 .closed { margin-left: 1px; margin-right: 20px; }
.l2 { padding-left: 144px; }
.node { position: relative; height: 40px; display: flex; align-items: center; background: #f2f2f2; white-space: nowrap; }
.w284 { width: 284px; } .w228 { width: 228px; } .w198 { width: 198px; } .w206 { width: 206px; }
.w230 { width: 230px; } .w222 { width: 222px; } .w164 { width: 164px; }
.bulb { width: 20px; height: 32px; margin: 0 0 0 12px; }
.ico { width: 32px; height: 32px; margin-left: 6px; }
.bulb + .ico { margin-left: 24px; }
.node span { margin-left: 27.5px; padding-bottom: 2px; letter-spacing: .2px; }
.root { width: 424px; }
.selected { width: 324px; height: 32px; margin: 0 8px 0 18px; background: #999; display: flex; align-items: center; color: #fff; font-weight: bold; }
.selected span { margin-left: 28px; letter-spacing: .48px; }
.radio { width: 28px; height: 28px; margin-top: -1px; }
.hatch { position: absolute; left: 48px; bottom: 1px; }

.bottom { position: relative; height: 58px; padding-left: 8px; display: flex; flex: none; }
.comments { height: 49px; border-top: 0; padding-left: 49px; background: linear-gradient(#f0f0f0, #e5e5e5); border-color: #c2c2c2; }
.navbar { width: 506px; height: 48px; margin: 2px 0 0 177px; padding-left: 6px; background: linear-gradient(#efefef, #e5e5e5); display: flex; align-items: center; }
.nav { width: 32px; height: 32px; margin-top: -2px; filter: drop-shadow(0 1px 1px rgba(0, 0, 0, .2)); }
.a2 { margin-left: 6px; } .a3, .a4, .a5 { margin-left: 20px; } .a6 { margin-left: 22px; }
.a7, .a8 { margin-left: 8px; }
.c1 { margin-left: 10px; } .c2 { margin-left: 10px; } .c3, .c4, .c5 { margin-left: 4px; }
.status { margin: 10px 0 0 85px; font-weight: bold; white-space: nowrap; letter-spacing: .61px; }
```
FILE: scene.js
```javascript
// Draws the selected control-point spline and the swept body beside it.
const ORIGIN_X = 650, ORIGIN_Y = 330;
const ctx = document.getElementById('scene').getContext('2d');
ctx.translate(-ORIGIN_X, -ORIGIN_Y);

const points = [[761,363],[701,483],[821,543],[941,662.500],[821,662.500],[761,782.500],[881,842.500],[941,962.500],[821,1022]];
const DEGREE = 5;
const knots = [0,0,0,0,0,0,1,2,3,4,4,4,4,4,4];

function deBoor(t) {
  let k = DEGREE;
  while (k < points.length - 1 && t >= knots[k + 1]) k++;
  const d = [];
  for (let j = 0; j <= DEGREE; j++) d.push(points[j + k - DEGREE].slice());
  for (let r = 1; r <= DEGREE; r++) {
    for (let j = DEGREE; j >= r; j--) {
      const lo = knots[j + k - DEGREE], hi = knots[j + 1 + k - r];
      const a = (t - lo) / (hi - lo);
      d[j] = [0, 1].map(i => (1 - a) * d[j - 1][i] + a * d[j][i]);
    }
  }
  return d[DEGREE];
}
const curve = [];
for (let i = 0; i <= 2000; i++) curve.push(deBoor(i / 2000 * 4));

function curveX(y) {
  for (let i = 1; i < curve.length; i++) {
    if (curve[i][1] >= y) {
      const [x0, y0] = curve[i - 1], [x1, y1] = curve[i];
      return x0 + (x1 - x0) * (y - y0) / ((y1 - y0) || 1);
    }
  }
  return curve[curve.length - 1][0];
}

// y, highlight, groove, beige start, beige end, dark band, light band, groove depth
const bands = [
  [364,  .17, .23, .34, .60, .71, .83, .8],
  [440,  .11, .15, .21, .63, .74, .83, .1],
  [470,  .15, .22, .30, .60, .73, .82, .5],
  [500,  .19, .31, .40, .57, .72, .82, .9],
  [540,  .22, .38, .48, .58, .70, .82, 1],
  [600,  .16, .33, .41, .63, .74, .86, 1],
  [636,  .12, .20, .26, .64, .73, .86, .2],
  [670,  .23, .32, .42, .60, .71, .82, .8],
  [700,  .18, .32, .43, .58, .70, .83, .9],
  [750,  .12, .16, .21, .63, .73, .83, .1],
  [790,  .15, .25, .34, .60, .73, .86, .8],
  [840,  .17, .31, .40, .56, .73, .85, 1],
  [890,  .14, .28, .37, .63, .75, .87, .9],
  [925,  .12, .19, .25, .62, .72, .85, .2],
  [965,  .20, .29, .40, .62, .72, .84, .6],
  [1000, .27, .38, .46, .60, .70, .83, 1],
  [1023, .33, .42, .46, .58, .68, .82, .8]
];
const mix = (a, b, t) => a.map((v, i) => v + (b[i] - v) * t);
const rgb = c => 'rgb(' + c.map(v => Math.round(Math.min(255, Math.max(0, v)))).join(',') + ')';
function bandAt(y) {
  let i = 0;
  while (i < bands.length - 2 && bands[i + 1][0] < y) i++;
  const p1 = bands[i], p2 = bands[i + 1];
  const p0 = bands[i - 1] || p1, p3 = bands[i + 2] || p2;
  const t = Math.min(1, Math.max(0, (y - p1[0]) / (p2[0] - p1[0])));
  return p1.map((v, j) => v + .5 * t * (p2[j] - p0[j] + t * (2 * p0[j] - 5 * v + 4 * p2[j] - p3[j] + t * (3 * (v - p2[j]) + p3[j] - p0[j]))));
}
const WIDTH = 118, SHIFT = 239.5;
for (let y = 364; y < 1022; y++) {
  const left = curveX(y) + SHIFT;
  const [, hl, groove, b0, b1, dark, light, depth] = bandAt(y);
  const g = ctx.createLinearGradient(left, 0, left + WIDTH, 0);
  const beige = [162, 154, 137];
  const tail = Math.max(0, (y - 975) / 47);
  g.addColorStop(0, '#4d4c47');
  g.addColorStop(hl * .45, '#5a5953');
  g.addColorStop(hl, rgb(mix([106, 108, 103], [136, 138, 131], depth)));
  g.addColorStop(hl + (groove - hl) * .45, rgb(mix([115, 114, 106], [130, 129, 121], depth)));
  g.addColorStop(groove, rgb(mix([130, 125, 114], [101, 96, 84], depth)));
  g.addColorStop(b0, rgb(mix([155, 147, 132], [215, 208, 198], tail)));
  g.addColorStop((b0 + b1) / 2, rgb(beige));
  g.addColorStop(b1, '#9f998c');
  g.addColorStop(b1 + (dark - b1) * .7, '#736e61');
  g.addColorStop(dark, '#6d685b');
  g.addColorStop(dark + (light - dark) * .35, '#75726a');
  g.addColorStop(light, '#92938d');
  g.addColorStop(light + (1 - light) * .5, '#5a574f');
  g.addColorStop(1, '#4f4b44');
  ctx.fillStyle = g;
  ctx.fillRect(Math.round(left), y, WIDTH, 1);
  ctx.fillStyle = y % 4 < 2 ? '#0c0c0b' : '#4a4843';
  ctx.fillRect(Math.round(left), y, 1.5, 1);
}
ctx.fillStyle = '#d4d4d4';
ctx.fillRect(1001, 362, 119, 2);
ctx.fillStyle = '#33322e';
ctx.fillRect(1062, 1020, 118, 2);
ctx.fillRect(1000, 364, 118, 1);

// Axis stub below the spline
ctx.fillStyle = '#adc1fb';
ctx.fillRect(761, 1020, 120, 4);

// Control polygon
ctx.strokeStyle = '#dd8038';
ctx.lineWidth = 2;
for (let i = 1; i < points.length; i++) {
  const [x0, y0] = points[i - 1], [x1, y1] = points[i];
  ctx.setLineDash([21, 9]);
  ctx.lineDashOffset = 0;
  ctx.beginPath();
  ctx.moveTo(x0, y0);
  ctx.lineTo(x1, y1);
  ctx.stroke();
}
ctx.setLineDash([]);

function dot(x, y, r, fill, stroke, w) {
  ctx.beginPath();
  ctx.arc(x, y, r, 0, Math.PI * 2);
  ctx.fillStyle = fill;
  ctx.fill();
  ctx.strokeStyle = stroke;
  ctx.lineWidth = w;
  ctx.stroke();
}
for (const [x, y] of points.slice(1, -1)) dot(x, y, 7, '#333', 'rgba(150,150,150,.75)', 2.5);
dot(821, 1022, 8.5, '#000', '#000', 1);

function strokeCurve(width, color) {
  ctx.beginPath();
  curve.forEach(([x, y], i) => i ? ctx.lineTo(x, y) : ctx.moveTo(x, y));
  ctx.lineWidth = width;
  ctx.strokeStyle = color;
  ctx.stroke();
}
strokeCurve(9, 'rgba(140,200,255,.35)');
strokeCurve(6.2, 'rgba(110,180,255,.5)');
strokeCurve(4, '#4595ff');
strokeCurve(1.5, '#0a5eff');
dot(761, 363, 8, 'rgba(225,238,252,.55)', '#8d8d8d', 1.8);
dot(821, 1022, 7.5, 'rgba(0,10,30,.65)', '#000', 2);
```
